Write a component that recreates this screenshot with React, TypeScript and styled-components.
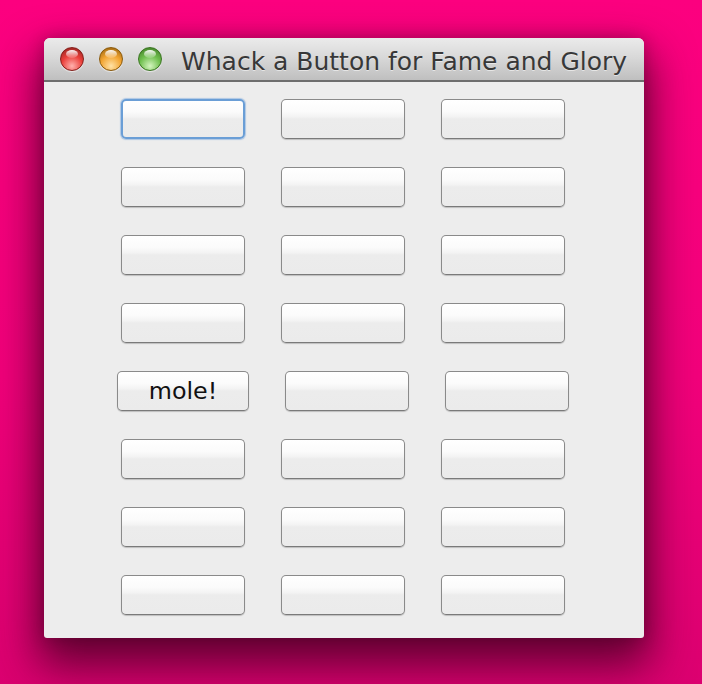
import React from "react";
import styled, { createGlobalStyle, css } from "styled-components";

const Global = createGlobalStyle`
  html, body { margin: 0; padding: 0; }
  body { width: 702px; height: 684px; overflow: hidden; font-family: "DejaVu Sans", "Liberation Sans", sans-serif; }
`;

const Desktop = styled.div`
  width: 702px;
  height: 684px;
  box-sizing: border-box;
  padding: 38px 0 0 44px;
  background: linear-gradient(180deg, #fc007f 0%, #f2007b 55%, #dc0070 100%);
`;

const Window = styled.div`
  width: 600px;
  height: 600px;
  display: flex;
  flex-direction: column;
  border-radius: 6px 6px 3px 3px;
  overflow: hidden;
  background: #ededed;
  box-shadow: 0 22px 44px 6px rgba(50, 0, 25, 0.72), 0 0 16px rgba(60, 0, 30, 0.3);
`;

const TitleBar = styled.div`
  height: 42px;
  flex: 0 0 42px;
  display: flex;
  align-items: center;
  padding-left: 16px;
  gap: 15px;
  background: linear-gradient(180deg, #ebebeb 0%, #d9d9d9 45%, #bfbfbf 100%);
  border-bottom: 2px solid #6e6e6e;
  box-sizing: content-box;
`;

const colors = {
  red: { base: "#ea3f3a", dark: "#861f1b", light: "#ffb2ae" },
  yellow: { base: "#f2a431", dark: "#8c5a0b", light: "#ffe2a6" },
  green: { base: "#6fbf4e", dark: "#3a7521", light: "#d4f5bf" },
};

const Light = styled.span<{ $c: keyof typeof colors }>`
  position: relative;
  width: 24px;
  height: 24px;
  flex: 0 0 24px;
  box-sizing: border-box;
  border-radius: 50%;
  ${({ $c }) => css`
    border: 1px solid ${colors[$c].dark};
    background: radial-gradient(circle at 50% 82%, ${colors[$c].light} 0%, ${colors[$c].base} 50%, ${colors[$c].dark} 100%);
  `}
  box-shadow: 0 1px 1px rgba(255, 255, 255, 0.6);
  &::after {
    content: "";
    position: absolute;
    left: 5px;
    top: 2px;
    width: 12px;
    height: 8px;
    border-radius: 50%;
    background: linear-gradient(180deg, rgba(255, 255, 255, 0.95), rgba(255, 255, 255, 0.15));
  }
`;

const Lights = styled.div`
  display: flex;
  gap: 15px;
  align-items: center;
`;

const Title = styled.div`
  margin-left: 4px;
  font-family: "DejaVu Sans", sans-serif;
  font-size: 25px;
  color: #383838;
  text-shadow: 0 1px 0 rgba(255, 255, 255, 0.55);
  white-space: nowrap;
  line-height: 1;
  padding-top: 5px;
`;

const Content = styled.div`
  flex: 1;
  display: flex;
  flex-direction: column;
  align-items: center;
  padding-top: 17px;
  gap: 28px;
`;

const Row = styled.div`
  display: flex;
  justify-content: center;
  gap: 36px;
  padding-right: 2px;
`;

const MoleButton = styled.button<{ $wide?: boolean; $focused?: boolean }>`
  width: ${({ $wide }) => ($wide ? 132 : 124)}px;
  height: 40px;
  box-sizing: border-box;
  margin: 0;
  padding: 2px 0 0 0;
  border: 1px solid #8a8a8a;
  border-bottom-color: #7a7a7a;
  border-radius: 5px;
  background: linear-gradient(180deg, #ffffff 0%, #fbfbfb 30%, #f3f3f3 44%, #ececec 50%, #ebebeb 100%);
  box-shadow: 0 1px 1px rgba(0, 0, 0, 0.2);
  font-family: "DejaVu Sans", sans-serif;
  font-size: 23.8px;
  color: #111;
  line-height: 1;
  display: flex;
  align-items: center;
  justify-content: center;
  ${({ $focused }) =>
    $focused &&
    css`
      border: 2px solid #6a9ed6;
      box-shadow: 0 0 1px 1px rgba(120, 165, 220, 0.55);
    `}
`;

const rows = 8;

export default function App() {
  return (
    <Desktop>
      <Global />
      <Window>
        <TitleBar>
          <Lights>
            <Light $c="red" />
            <Light $c="yellow" />
            <Light $c="green" />
          </Lights>
          <Title>Whack a Button for Fame and Glory</Title>
        </TitleBar>
        <Content>
          {Array.from({ length: rows }).map((_, r) => (
            <Row key={r}>
              {[0, 1, 2].map((c) => {
                const mole = r === 4 && c === 0;
                return (
                  <MoleButton key={c} $wide={mole} $focused={r === 0 && c === 0}>
                    {mole ? "mole!" : ""}
                  </MoleButton>
                );
              })}
            </Row>
          ))}
        </Content>
      </Window>
    </Desktop>
  );
}
